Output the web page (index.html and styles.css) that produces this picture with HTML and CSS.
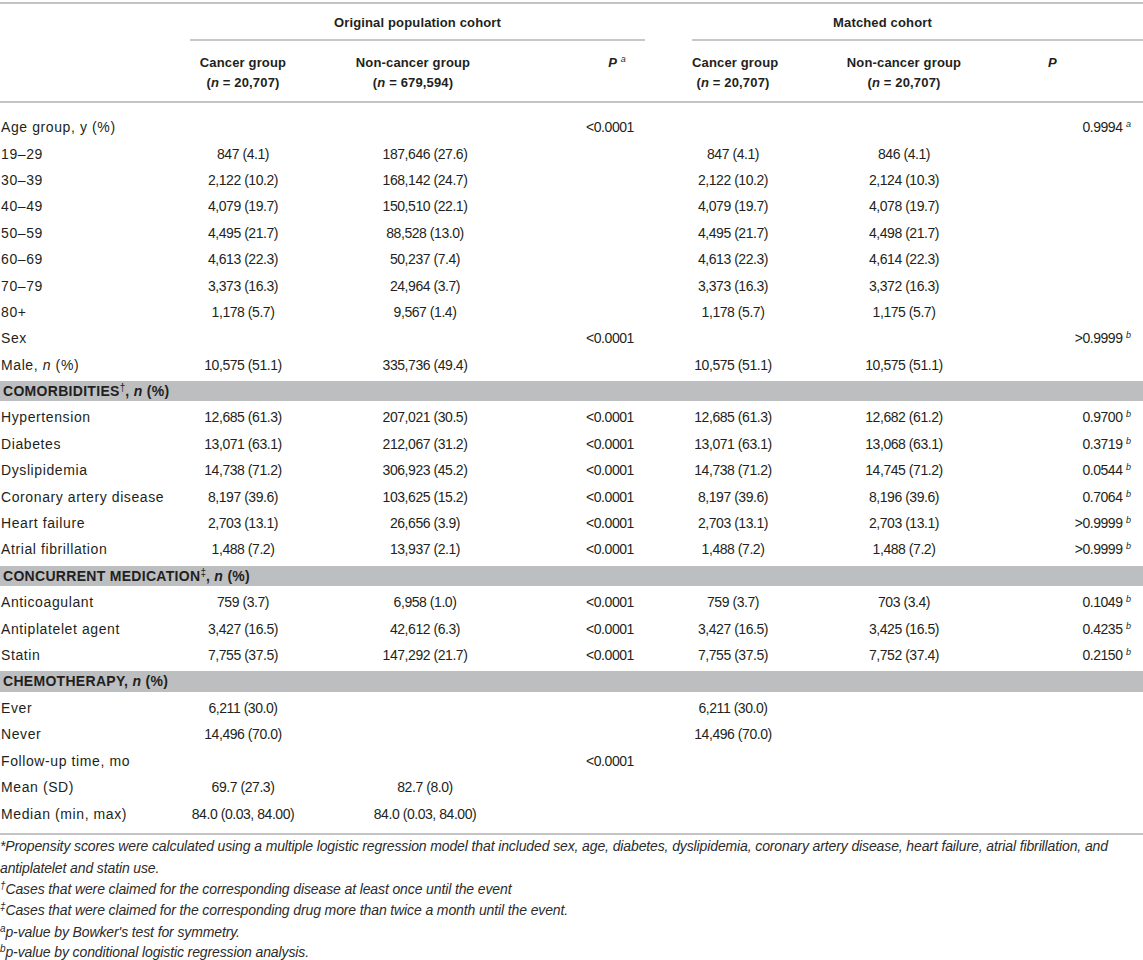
FILE: index.html
```html
<!DOCTYPE html>
<html lang="en">
<head>
<meta charset="utf-8">
<title>Baseline characteristics</title>
<link rel="stylesheet" href="styles.css">
</head>
<body>
<div class="page">
<table class="tbl">
  <colgroup>
    <col class="c-label">
    <col class="c-cg">
    <col class="c-ncg">
    <col class="c-p">
    <col class="c-mcg">
    <col class="c-mncg">
    <col class="c-mp">
  </colgroup>
  <thead>
    <tr class="h1">
      <th></th>
      <th colspan="3"><div class="grp grp-l">Original population cohort</div></th>
      <th colspan="3"><div class="grp grp-r">Matched cohort</div></th>
    </tr>
    <tr class="h2">
      <th></th>
      <th class="hc">Cancer group<br>(<i>n</i> = 20,707)</th>
      <th class="hc hc-ncg">Non-cancer group<br>(<i>n</i> = 679,594)</th>
      <th class="hc hc-p"><i>P</i> <sup>a</sup></th>
      <th class="hc">Cancer group<br>(<i>n</i> = 20,707)</th>
      <th class="hc">Non-cancer group<br>(<i>n</i> = 20,707)</th>
      <th class="hc hc-mp"><i>P</i></th>
    </tr>
  </thead>
  <tbody>
    <tr class="first"><td>Age group, y (%)</td><td></td><td></td><td class="p">&lt;0.0001</td><td></td><td></td><td class="mp">0.9994 <sup>a</sup></td></tr>
    <tr><td>19–29</td><td class="v">847 (4.1)</td><td class="v">187,646 (27.6)</td><td class="p"></td><td class="v">847 (4.1)</td><td class="v">846 (4.1)</td><td class="mp"></td></tr>
    <tr><td>30–39</td><td class="v">2,122 (10.2)</td><td class="v">168,142 (24.7)</td><td class="p"></td><td class="v">2,122 (10.2)</td><td class="v">2,124 (10.3)</td><td class="mp"></td></tr>
    <tr><td>40–49</td><td class="v">4,079 (19.7)</td><td class="v">150,510 (22.1)</td><td class="p"></td><td class="v">4,079 (19.7)</td><td class="v">4,078 (19.7)</td><td class="mp"></td></tr>
    <tr><td>50–59</td><td class="v">4,495 (21.7)</td><td class="v">88,528 (13.0)</td><td class="p"></td><td class="v">4,495 (21.7)</td><td class="v">4,498 (21.7)</td><td class="mp"></td></tr>
    <tr><td>60–69</td><td class="v">4,613 (22.3)</td><td class="v">50,237 (7.4)</td><td class="p"></td><td class="v">4,613 (22.3)</td><td class="v">4,614 (22.3)</td><td class="mp"></td></tr>
    <tr><td>70–79</td><td class="v">3,373 (16.3)</td><td class="v">24,964 (3.7)</td><td class="p"></td><td class="v">3,373 (16.3)</td><td class="v">3,372 (16.3)</td><td class="mp"></td></tr>
    <tr><td>80+</td><td class="v">1,178 (5.7)</td><td class="v">9,567 (1.4)</td><td class="p"></td><td class="v">1,178 (5.7)</td><td class="v">1,175 (5.7)</td><td class="mp"></td></tr>
    <tr><td>Sex</td><td></td><td></td><td class="p">&lt;0.0001</td><td></td><td></td><td class="mp">&gt;0.9999 <sup>b</sup></td></tr>
    <tr><td>Male, <i>n</i> (%)</td><td class="v">10,575 (51.1)</td><td class="v">335,736 (49.4)</td><td class="p"></td><td class="v">10,575 (51.1)</td><td class="v">10,575 (51.1)</td><td class="mp"></td></tr>
    <tr class="band"><td colspan="7">COMORBIDITIES<sup>†</sup>, <i>n</i> (%)</td></tr>
    <tr><td>Hypertension</td><td class="v">12,685 (61.3)</td><td class="v">207,021 (30.5)</td><td class="p">&lt;0.0001</td><td class="v">12,685 (61.3)</td><td class="v">12,682 (61.2)</td><td class="mp">0.9700 <sup>b</sup></td></tr>
    <tr><td>Diabetes</td><td class="v">13,071 (63.1)</td><td class="v">212,067 (31.2)</td><td class="p">&lt;0.0001</td><td class="v">13,071 (63.1)</td><td class="v">13,068 (63.1)</td><td class="mp">0.3719 <sup>b</sup></td></tr>
    <tr><td>Dyslipidemia</td><td class="v">14,738 (71.2)</td><td class="v">306,923 (45.2)</td><td class="p">&lt;0.0001</td><td class="v">14,738 (71.2)</td><td class="v">14,745 (71.2)</td><td class="mp">0.0544 <sup>b</sup></td></tr>
    <tr><td>Coronary artery disease</td><td class="v">8,197 (39.6)</td><td class="v">103,625 (15.2)</td><td class="p">&lt;0.0001</td><td class="v">8,197 (39.6)</td><td class="v">8,196 (39.6)</td><td class="mp">0.7064 <sup>b</sup></td></tr>
    <tr><td>Heart failure</td><td class="v">2,703 (13.1)</td><td class="v">26,656 (3.9)</td><td class="p">&lt;0.0001</td><td class="v">2,703 (13.1)</td><td class="v">2,703 (13.1)</td><td class="mp">&gt;0.9999 <sup>b</sup></td></tr>
    <tr><td>Atrial fibrillation</td><td class="v">1,488 (7.2)</td><td class="v">13,937 (2.1)</td><td class="p">&lt;0.0001</td><td class="v">1,488 (7.2)</td><td class="v">1,488 (7.2)</td><td class="mp">&gt;0.9999 <sup>b</sup></td></tr>
    <tr class="band"><td colspan="7">CONCURRENT MEDICATION<sup>‡</sup>, <i>n</i> (%)</td></tr>
    <tr><td>Anticoagulant</td><td class="v">759 (3.7)</td><td class="v">6,958 (1.0)</td><td class="p">&lt;0.0001</td><td class="v">759 (3.7)</td><td class="v">703 (3.4)</td><td class="mp">0.1049 <sup>b</sup></td></tr>
    <tr><td>Antiplatelet agent</td><td class="v">3,427 (16.5)</td><td class="v">42,612 (6.3)</td><td class="p">&lt;0.0001</td><td class="v">3,427 (16.5)</td><td class="v">3,425 (16.5)</td><td class="mp">0.4235 <sup>b</sup></td></tr>
    <tr><td>Statin</td><td class="v">7,755 (37.5)</td><td class="v">147,292 (21.7)</td><td class="p">&lt;0.0001</td><td class="v">7,755 (37.5)</td><td class="v">7,752 (37.4)</td><td class="mp">0.2150 <sup>b</sup></td></tr>
    <tr class="band"><td colspan="7">CHEMOTHERAPY, <i>n</i> (%)</td></tr>
    <tr><td>Ever</td><td class="v">6,211 (30.0)</td><td class="v"></td><td class="p"></td><td class="v">6,211 (30.0)</td><td class="v"></td><td class="mp"></td></tr>
    <tr><td>Never</td><td class="v">14,496 (70.0)</td><td class="v"></td><td class="p"></td><td class="v">14,496 (70.0)</td><td class="v"></td><td class="mp"></td></tr>
    <tr><td>Follow-up time, mo</td><td></td><td></td><td class="p">&lt;0.0001</td><td></td><td></td><td class="mp"></td></tr>
    <tr><td>Mean (SD)</td><td class="v">69.7 (27.3)</td><td class="v">82.7 (8.0)</td><td class="p"></td><td></td><td></td><td class="mp"></td></tr>
    <tr class="last"><td>Median (min, max)</td><td class="v">84.0 (0.03, 84.00)</td><td class="v">84.0 (0.03, 84.00)</td><td class="p"></td><td></td><td></td><td class="mp"></td></tr>
  </tbody>
</table>
<div class="notes">
  <p>*Propensity scores were calculated using a multiple logistic regression model that included sex, age, diabetes, dyslipidemia, coronary artery disease, heart failure, atrial fibrillation, and antiplatelet and statin use.</p>
  <p><sup>†</sup>Cases that were claimed for the corresponding disease at least once until the event</p>
  <p><sup>‡</sup>Cases that were claimed for the corresponding drug more than twice a month until the event.</p>
  <p><sup>a</sup>p-value by Bowker's test for symmetry.</p>
  <p class="note-last"><sup>b</sup>p-value by conditional logistic regression analysis.</p>
</div>
</div>
</body>
</html>
```

FILE: styles.css
```css
html, body {
  margin: 0;
  padding: 0;
  background: #ffffff;
}

.page {
  width: 1143px;
  padding-top: 2px;
  font-family: "Liberation Sans", Arial, sans-serif;
  color: #231f20;
}

.tbl {
  width: 1143px;
  border-collapse: collapse;
  table-layout: fixed;
  font-size: 14px;
}

.c-label { width: 190px; }
.c-cg { width: 106px; }
.c-ncg { width: 258px; }
.c-p { width: 138px; }
.c-mcg { width: 82px; }
.c-mncg { width: 260px; }
.c-mp { width: 109px; }

.tbl thead th {
  font-size: 13px;
  letter-spacing: 0.15px;
}

.tbl thead tr.h1 th {
  border-top: 2px solid #c4c4c4;
  padding: 0;
  font-weight: bold;
  vertical-align: bottom;
}

.grp {
  height: 37px;
  line-height: 38px;
  text-align: center;
  border-bottom: 2px solid #c8c8c8;
  box-sizing: border-box;
}

.grp-l {
  margin-right: 47px;
}

.grp-r {
  padding-right: 70px;
}

.tbl thead tr.h2 th {
  border-bottom: 2px solid #c4c4c4;
  padding: 12px 0 8px;
  line-height: 20px;
  font-weight: bold;
  vertical-align: top;
  white-space: nowrap;
}

.hc { text-align: center; }
.hc-ncg { padding-right: 24px !important; }
.hc-p { padding-right: 12px !important; }
.hc-mp { padding-right: 72px !important; }

.tbl sup {
  font-size: 9px;
  font-style: italic;
  font-weight: normal;
  vertical-align: 5px;
  line-height: 0;
  letter-spacing: 0;
}

.tbl tbody td {
  height: 26.4px;
  padding: 0;
  line-height: 16px;
  white-space: nowrap;
  vertical-align: middle;
  letter-spacing: -0.45px;
}

.tbl tbody td:first-child {
  padding-left: 1px;
  letter-spacing: 0.6px;
}

.tbl tbody tr.first td {
  padding-top: 11px;
}

.tbl tbody tr.last td {
  height: 27px;
  padding-bottom: 6px;
  border-bottom: 2px solid #c4c4c4;
}

.v { text-align: center; }

.p {
  text-align: center;
  padding-right: 26px !important;
}

.mp {
  text-align: right;
  padding-right: 12px !important;
}

.tbl tbody tr.band td {
  height: 20.4px;
  padding: 0 0 0 3px;
  background: #bcbec0;
  background-clip: padding-box;
  border-top: 3px solid #ffffff;
  border-bottom: 3px solid #ffffff;
  font-weight: bold;
  letter-spacing: 0.3px;
}

.tbl tbody tr.band sup {
  font-style: normal;
  font-size: 10px;
}

.notes {
  padding-top: 1px;
  font-style: italic;
  font-size: 14px;
  letter-spacing: -0.12px;
  color: #2b2b2b;
}

.notes p {
  margin: 0;
  line-height: 21.4px;
}

.notes p.note-last {
  line-height: 16px;
  padding-top: 1px;
}

.notes sup {
  font-size: 10px;
  vertical-align: 5px;
  line-height: 0;
}
```
